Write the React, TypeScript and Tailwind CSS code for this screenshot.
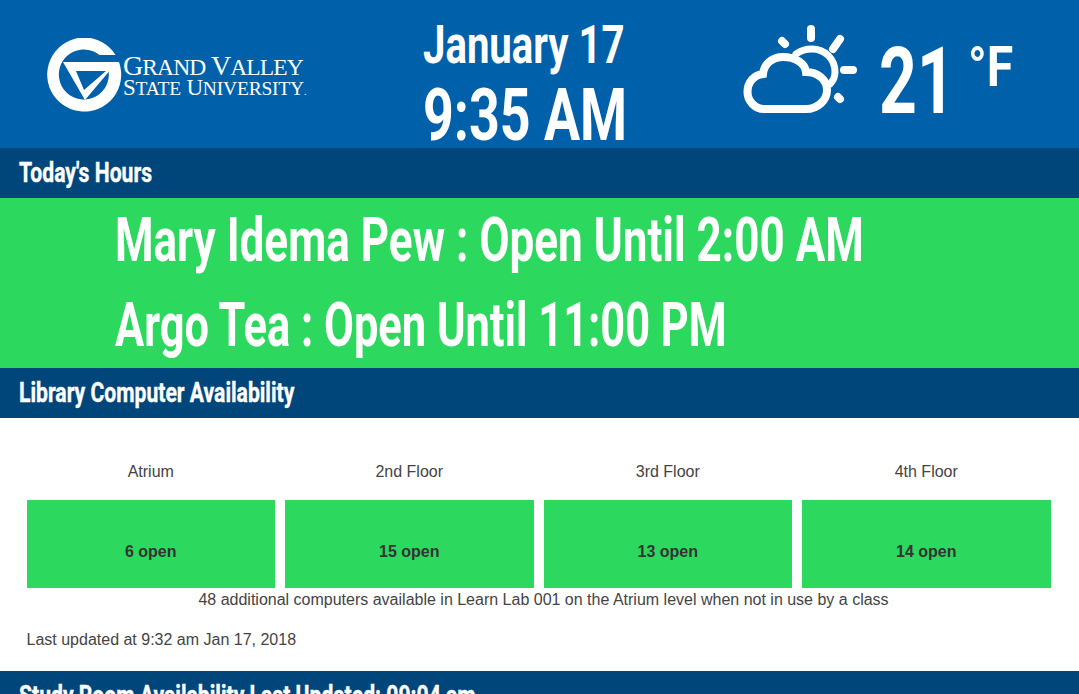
import React from "react";

const Cond = ({ children, className = "" }: { children: React.ReactNode; className?: string }) => (
  <span className={"inline-block origin-left whitespace-nowrap font-['Roboto',sans-serif] font-bold " + className}>{children}</span>
);

const Logo = () => (
  <svg width="76" height="76" viewBox="0 0 76 76" className="shrink-0">
    <path fill="#fff" d="M68.6 17A37 37 0 1 0 72 24H58.5A25 25 0 1 1 52.5 17Z" />
    <path fillRule="evenodd" fill="#fff" d="M16 24H70L38 62ZM29 33L37 52L59 33Z" />
  </svg>
);

const Weather = () => (
  <svg width="120" height="95" viewBox="0 0 120 95" fill="none" stroke="#fff" strokeLinecap="round" className="shrink-0">
    <path d="M24 87H66C78 87 87 78 87 68C87 58 78 50 66 50C65 41 55 35 43 35C32 35 24 42 23 52C14 53 7.5 60 7.5 70C7.5 79 15 87 24 87Z" strokeWidth="8" />
    <path d="M56 32C60 29 66 27 72 27C85 27 95 37 95 50C95 54 93 59 90 62" strokeWidth="7" />
    <path d="M71 7V16M42 19L45 22M100 17L93 27M104 48H113M98 75L100 77" strokeWidth="8" />
  </svg>
);

const Bar = ({ children }: { children: React.ReactNode }) => (
  <div className="h-[50px] shrink-0 overflow-hidden bg-[#00467a] pl-[19px] pt-[10px] leading-[30px] text-white">
    <Cond className="scale-x-[0.755] text-[28px] [-webkit-text-stroke:0.4px_#fff]">{children}</Cond>
  </div>
);

const floors = [
  ["Atrium", "6 open"],
  ["2nd Floor", "15 open"],
  ["3rd Floor", "13 open"],
  ["4th Floor", "14 open"],
];

export default function App() {
  return (
    <div className="flex h-[694px] w-[1079px] flex-col overflow-hidden bg-white font-['Liberation_Sans',sans-serif] text-[#444]">
      <header className="flex h-[148px] shrink-0 bg-[#0061aa] text-white">
        <div className="flex w-[360px] items-center pl-[47px] pt-[4px]">
          <Logo />
          <div className="flex flex-col pt-[1px] font-['Liberation_Serif',serif]">
            <span className="h-[22px] whitespace-nowrap text-[28px] leading-[22px] tracking-[-0.9px]">G<span className="text-[23.5px]">RAND</span> V<span className="text-[23.5px]">ALLEY</span></span>
            <span className="mt-[1px] h-[20px] whitespace-nowrap text-[23px] leading-[20px] tracking-[-0.2px]">S<span className="text-[19.5px]">TATE</span> U<span className="text-[19.5px]">NIVERSITY</span><span className="text-[10px]">.</span></span>
          </div>
        </div>
        <div className="flex w-[330px] flex-col pl-[63px] pt-[17px]">
          <Cond className="h-[56px] scale-x-[0.743] text-[54px] leading-[56px]">January 17</Cond>
          <Cond className="mt-[7px] scale-x-[0.736] text-[73px] leading-[70px]">9:35 AM</Cond>
        </div>
        <div className="flex items-start pl-[50px]">
          <div className="mt-[22px]"><Weather /></div>
          <div className="ml-[19px] mt-[32px] w-[89px]">
            <Cond className="scale-x-[0.71] text-[93px] leading-[100px]">21</Cond>
          </div>
          <Cond className="mt-[37px] scale-x-[0.86] text-[56px] leading-[60px]">°F</Cond>
        </div>
      </header>
      <Bar>Today's Hours</Bar>
      <section className="flex h-[170px] shrink-0 flex-col bg-[#2dd85f] pl-[115px] text-white">
        <Cond className="mt-[7px] h-[85px] scale-x-[0.71] text-[62px] leading-[70px]">Mary Idema Pew : Open Until 2:00 AM</Cond>
        <Cond className="scale-x-[0.7] text-[62px] leading-[70px]">Argo Tea : Open Until 11:00 PM</Cond>
      </section>
      <Bar>Library Computer Availability</Bar>
      <section className="h-[253px] shrink-0 pl-[26.5px] pr-[28.5px] pt-[44px] text-[16px]">
        <div className="grid grid-cols-4 gap-[10px]">
          {floors.map(([name, open]) => (
            <div key={name} className="flex flex-col">
              <div className="h-[38px] text-center leading-[20px]">{name}</div>
              <div className="flex h-[88px] items-center justify-center bg-[#2dd85f] pt-[15px] font-bold text-[#333]">{open}</div>
            </div>
          ))}
        </div>
        <div className="mt-[2px] pl-[10px] text-center leading-[20px]">48 additional computers available in Learn Lab 001 on the Atrium level when not in use by a class</div>
        <div className="mt-[20px] leading-[20px]">Last updated at 9:32 am Jan 17, 2018</div>
      </section>
      <Bar>Study Room Availability Last Updated: 09:04 am</Bar>
    </div>
  );
}
